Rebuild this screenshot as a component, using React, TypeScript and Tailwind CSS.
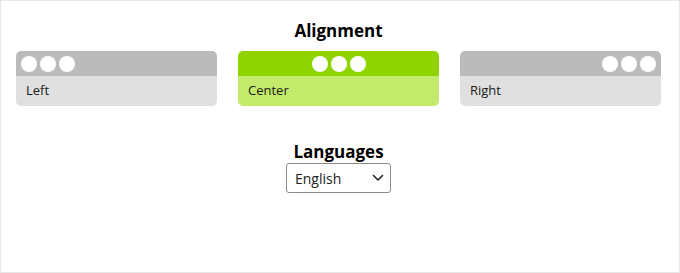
const cards = [
  { label: "Left", align: "justify-start", active: false },
  { label: "Center", align: "justify-center", active: true },
  { label: "Right", align: "justify-end", active: false },
];

function Dots() {
  return (
    <>
      <span className="h-4 w-4 rounded-full bg-white" />
      <span className="h-4 w-4 rounded-full bg-white" />
      <span className="h-4 w-4 rounded-full bg-white" />
    </>
  );
}

export default function App() {
  return (
    <div
      className="h-[273px] w-[680px] border border-[#e8e8e8] bg-white text-[#1a1a1a]"
      style={{ fontFamily: '"Open Sans", "Noto Sans", sans-serif' }}
    >
      <div className="flex flex-col items-center pl-[15px] pr-[18px] pt-[18px]">
        <h2 className="text-[17px] font-bold leading-6 text-black">Alignment</h2>
        <div className="mt-[8px] grid w-full grid-cols-3 gap-[21px]">
          {cards.map((c) => (
            <div key={c.label} className="overflow-hidden rounded-[5px]">
              <div
                className={`flex h-[25px] items-center gap-[3px] px-[5px] ${c.align} ${
                  c.active ? "bg-[#8fd300]" : "bg-[#bbbbbb]"
                }`}
              >
                <Dots />
              </div>
              <div
                className={`flex h-[30px] items-center px-[10px] text-[13px] ${
                  c.active ? "bg-[#c3ea6b]" : "bg-[#e0e0e0]"
                }`}
              >
                {c.label}
              </div>
            </div>
          ))}
        </div>
        <h2 className="mt-[34px] text-[17px] font-bold leading-6 text-black">Languages</h2>
        <button className="mt-[-1px] flex h-[30px] w-[105px] items-center justify-between rounded-[3px] border border-[#8a8a8a] pl-[8px] pr-[6px] text-[14px] text-[#222]">
          <span>English</span>
          <svg width="12" height="8" viewBox="0 0 12 8" fill="none">
            <path d="M1.5 1.5 6 6l4.5-4.5" stroke="#222" strokeWidth="1.6" strokeLinecap="round" strokeLinejoin="round" />
          </svg>
        </button>
      </div>
    </div>
  );
}
